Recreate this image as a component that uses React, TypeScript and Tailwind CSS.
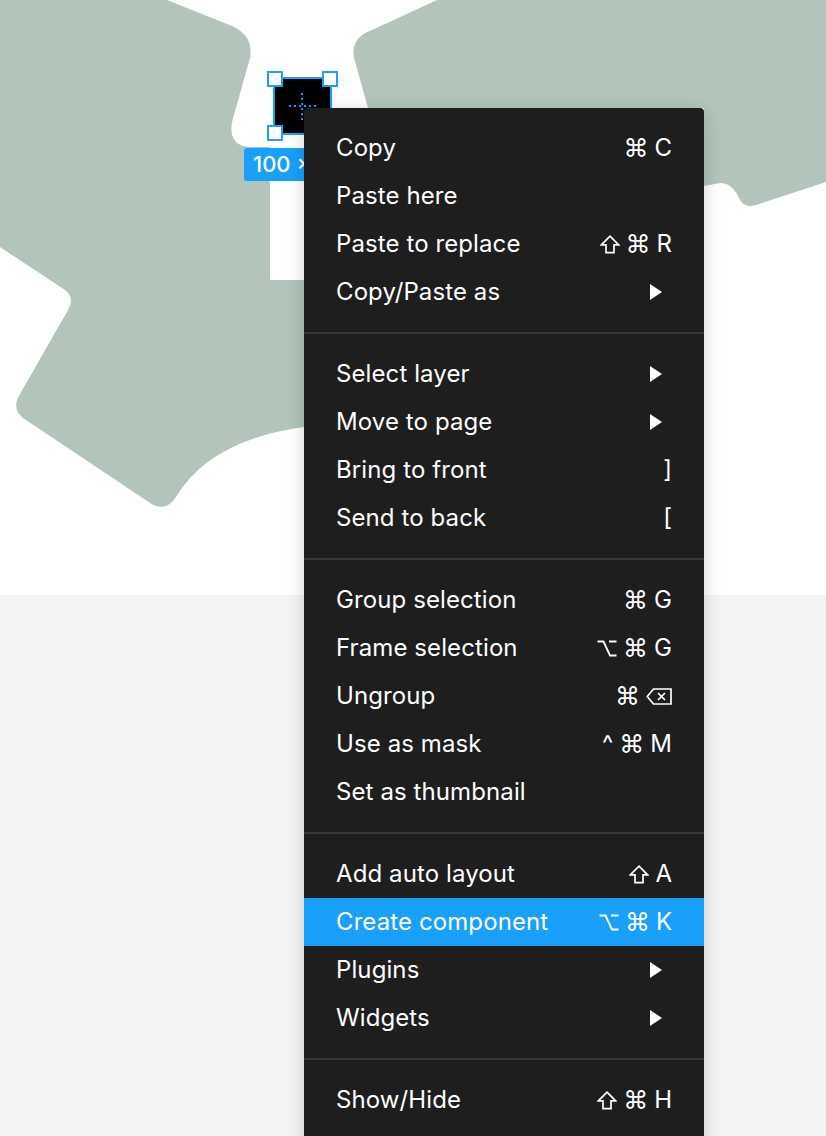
import React from "react";

type Item = { label: string; keys?: string[]; sub?: boolean; active?: boolean };

const groups: Item[][] = [
  [
    { label: "Copy", keys: ["⌘", "C"] },
    { label: "Paste here" },
    { label: "Paste to replace", keys: ["⇧", "⌘", "R"] },
    { label: "Copy/Paste as", sub: true },
  ],
  [
    { label: "Select layer", sub: true },
    { label: "Move to page", sub: true },
    { label: "Bring to front", keys: ["]"] },
    { label: "Send to back", keys: ["["] },
  ],
  [
    { label: "Group selection", keys: ["⌘", "G"] },
    { label: "Frame selection", keys: ["⌥", "⌘", "G"] },
    { label: "Ungroup", keys: ["⌘", "⌫"] },
    { label: "Use as mask", keys: ["^", "⌘", "M"] },
    { label: "Set as thumbnail" },
  ],
  [
    { label: "Add auto layout", keys: ["⇧", "A"] },
    { label: "Create component", keys: ["⌥", "⌘", "K"], active: true },
    { label: "Plugins", sub: true },
    { label: "Widgets", sub: true },
  ],
  [{ label: "Show/Hide", keys: ["⇧", "⌘", "H"] }],
];

const Arrow = () => (
  <svg width="12" height="16" viewBox="0 0 12 16" className="mr-[10px]">
    <path d="M0 0 L12 8 L0 16 Z" fill="#fff" />
  </svg>
);

const Shift = () => (
  <svg width="20" height="19" viewBox="0 0 20 19">
    <path
      d="M10 1.2 L18.6 9.8 H14 V17.6 H6 V9.8 H1.4 Z"
      fill="none"
      stroke="#fff"
      strokeWidth="1.7"
      strokeLinejoin="miter"
    />
  </svg>
);

const Option = () => (
  <svg width="20" height="17" viewBox="0 0 20 17">
    <path d="M0.5 1.5 H6.5 L13 15.5 H19.5 M12 1.5 H19.5" fill="none" stroke="#fff" strokeWidth="1.8" />
  </svg>
);

const Backspace = () => (
  <svg width="26" height="17" viewBox="0 0 26 17">
    <path d="M7.5 1 H25 V16 H7.5 L1.2 8.5 Z" fill="none" stroke="#fff" strokeWidth="1.7" />
    <path d="M12 5 L19 12 M19 5 L12 12" stroke="#fff" strokeWidth="1.7" />
  </svg>
);

const Key = ({ k }: { k: string }) => {
  if (k === "⇧") return <Shift />;
  if (k === "⌥") return <Option />;
  if (k === "⌫") return <Backspace />;
  if (k === "⌘")
    return <span className="font-['DejaVu_Sans',sans-serif] text-[25px] leading-none">{k}</span>;
  return <span className="text-[24px] leading-none">{k}</span>;
};

const Row = ({ item }: { item: Item }) => (
  <div
    className={`h-12 flex items-center justify-between pl-[32px] pr-[32px] text-white ${
      item.active ? "bg-[#18a0fb]" : ""
    }`}
  >
    <span className="text-[24px] tracking-[0.1px]">{item.label}</span>
    {item.sub && <Arrow />}
    {item.keys && (
      <span className="flex items-center gap-[6px]">
        {item.keys.map((k, i) => (
          <Key key={i} k={k} />
        ))}
      </span>
    )}
  </div>
);

const Crosshair = () => (
  <svg width="30" height="30" viewBox="0 0 30 30" className="absolute left-[13px] top-[13px]">
    <path d="M1 14 H28 M14 1 V28" stroke="#18a0fb" strokeWidth="2" strokeDasharray="2 3" />
  </svg>
);

export default function App() {
  return (
    <div className="relative w-[826px] h-[1136px] overflow-hidden bg-[#f4f4f4] font-['Inter',sans-serif]">
      <div className="relative h-[595px] bg-white">
        <svg width="826" height="595" viewBox="0 0 826 595" className="absolute inset-0">
          <path
            d="M0 0 L167 0 L232 26 Q254 36 250 58 L232 122 Q228 146 250 147 L304 147 L304 427 Q210 440 176 497 Q166 513 150 503 L26 420 Q10 410 20 394 L68 310 Q76 296 62 288 L0 247 Z"
            fill="#b3c5bb"
          />
          <path
            d="M437 0 L826 0 L826 182 L756 205 Q744 209 739 198 Q732 183 720 183 L704 186 L704 108 L368 108 L354 58 Q350 38 372 30 Z"
            fill="#b3c5bb"
          />
          <rect x="270" y="147" width="34" height="133" fill="#fff" />
        </svg>

        {/* selected layer */}
        <div className="absolute left-[273px] top-[77px] w-[59px] h-[58px] bg-black border-2 border-[#18a0fb]">
          <Crosshair />
        </div>
        <div className="absolute left-[267px] top-[71px] w-[16px] h-[16px] bg-white border-2 border-[#18a0fb]" />
        <div className="absolute left-[322px] top-[71px] w-[16px] h-[16px] bg-white border-2 border-[#18a0fb]" />
        <div className="absolute left-[267px] top-[125px] w-[16px] h-[16px] bg-white border-2 border-[#18a0fb]" />
        <div className="absolute left-[244px] top-[148px] h-[33px] pl-[9px] pr-[9px] rounded-[3px] bg-[#18a0fb] text-white text-[22px] font-medium leading-[33px] whitespace-nowrap">
          100 × 100
        </div>
      </div>

      {/* context menu */}
      <div className="absolute left-[304px] top-[108px] w-[400px] bg-[#1e1e1e] rounded-[4px] pt-4 pb-6 shadow-[0_4px_18px_rgba(0,0,0,0.18)]">
        {groups.map((g, gi) => (
          <div key={gi}>
            {gi > 0 && <div className="h-[2px] bg-[#383838] my-4" />}
            {g.map((item) => (
              <Row key={item.label} item={item} />
            ))}
          </div>
        ))}
      </div>
    </div>
  );
}
